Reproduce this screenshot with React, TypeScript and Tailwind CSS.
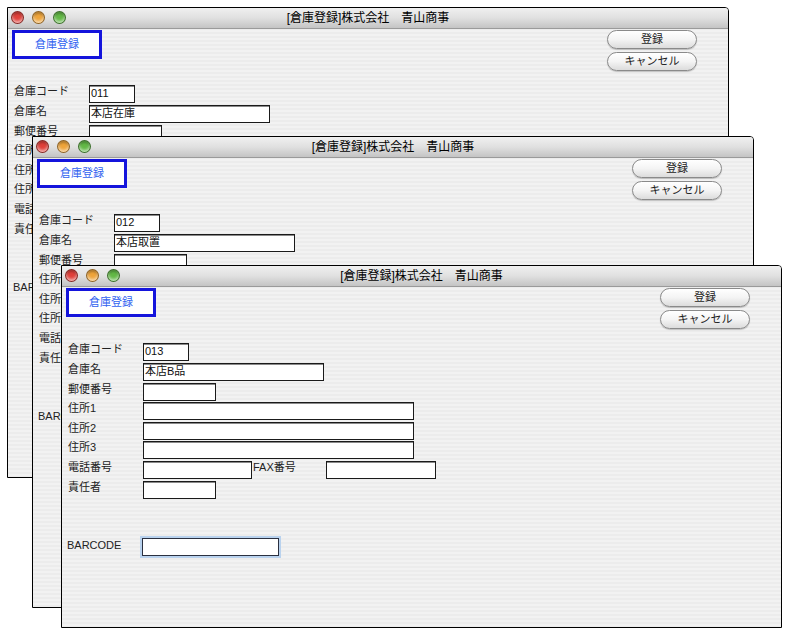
import React from "react";

interface Row {
  label: string;
  box: string;
  mt: string;
  value?: "code" | "name";
  fax?: boolean;
}

const rows: Row[] = [
  { label: "倉庫コード", box: "w-[46px]", mt: "mt-0", value: "code" },
  { label: "倉庫名", box: "w-[181px]", mt: "mt-[2px]", value: "name" },
  { label: "郵便番号", box: "w-[73px]", mt: "mt-[2px]" },
  { label: "住所1", box: "w-[271px]", mt: "mt-[1px]" },
  { label: "住所2", box: "w-[271px]", mt: "mt-[2px]" },
  { label: "住所3", box: "w-[271px]", mt: "mt-[1px]" },
  { label: "電話番号", box: "w-[109px]", mt: "mt-[2px]", fax: true },
  { label: "責任者", box: "w-[73px]", mt: "mt-[2px]" },
];

function Field({ box, text }: { box: string; text?: string }) {
  return (
    <div
      className={`${box} h-[18px] shrink-0 border border-[#1a1a1a] bg-white shadow-[inset_0_1px_0_#8a8a8a] pl-[1px] text-[11px] leading-[14px] text-[#111]`}
    >
      {text}
    </div>
  );
}

function Light({ color }: { color: string }) {
  return (
    <div
      className={`w-[13px] h-[13px] rounded-full border border-black/40 ${color} shadow-[inset_0_-2px_3px_rgba(255,255,255,0.6),inset_0_2px_2px_rgba(0,0,0,0.25)]`}
    />
  );
}

function PillButton({ label }: { label: string }) {
  return (
    <div className="w-[90px] h-[19px] rounded-full border border-[#8a8a8a] bg-gradient-to-b from-white via-[#f4f4f4] to-[#dcdcdc] shadow-[0_1px_1px_rgba(0,0,0,0.2)] flex items-center justify-center text-[11px] text-[#222]">
      {label}
    </div>
  );
}

function Window({
  pos,
  code,
  name,
}: {
  pos: string;
  code: string;
  name: string;
}) {
  return (
    <div
      className={`absolute ${pos} border border-black rounded-tr-[4px] overflow-hidden flex flex-col bg-[image:repeating-linear-gradient(180deg,#ececec_0px,#ececec_2px,#f2f2f2_2px,#f2f2f2_4px)]`}
    >
      {/* title bar */}
      <div className="relative h-[21px] shrink-0 border-b border-[#9a9a9a] bg-gradient-to-b from-[#f0f0f0] via-[#e0e0e0] to-[#c4c4c4] flex items-center">
        <div className="absolute left-[3px] top-[3px] flex gap-[8px]">
          <Light color="bg-[#e0403a]" />
          <Light color="bg-[#eea43a]" />
          <Light color="bg-[#62b845]" />
        </div>
        <div className="w-full text-center text-[12px] leading-[14px] text-black">
          [倉庫登録]株式会社　青山商事
        </div>
      </div>

      {/* header: mode box + buttons */}
      <div className="flex justify-between items-start pt-[1px] pl-[4px] pr-[31px]">
        <div className="w-[90px] h-[29px] border-[3px] border-[#1414dc] bg-white flex items-center justify-center text-[11px] text-[#2f62f0]">
          倉庫登録
        </div>
        <div className="flex flex-col gap-[3px]">
          <PillButton label="登録" />
          <PillButton label="キャンセル" />
        </div>
      </div>

      {/* form */}
      <div className="flex flex-col mt-[14px] pl-[6px] text-[11px] text-[#222]">
        {rows.map((r) => (
          <div key={r.label} className={`flex items-start ${r.mt}`}>
            <div className="w-[75px] shrink-0 leading-[13px]">{r.label}</div>
            <Field
              box={r.box}
              text={r.value === "code" ? code : r.value === "name" ? name : undefined}
            />
            {r.fax && (
              <>
                <div className="w-[74px] shrink-0 leading-[13px] pl-[1px]">FAX番号</div>
                <Field box="w-[110px]" />
              </>
            )}
          </div>
        ))}
        <div className="flex items-start mt-[39px]">
          <div className="w-[75px] shrink-0 leading-[13px] pt-[1px] -ml-[1px] pr-[1px]">BARCODE</div>
          <div className="w-[137px] h-[18px] border border-[#2a3040] bg-white shadow-[0_0_0_2px_#b9d2ee]" />
        </div>
      </div>
    </div>
  );
}

export default function App() {
  return (
    <div className="relative w-[790px] h-[631px] overflow-hidden bg-white font-['Liberation_Sans','Noto_Sans_CJK_JP',sans-serif]">
      <Window pos="left-[7px] top-[7px] w-[722px] h-[471px]" code="011" name="本店在庫" />
      <Window pos="left-[32px] top-[136px] w-[722px] h-[472px]" code="012" name="本店取置" />
      <Window pos="left-[61px] top-[265px] w-[721px] h-[363px]" code="013" name="本店B品" />
    </div>
  );
}
